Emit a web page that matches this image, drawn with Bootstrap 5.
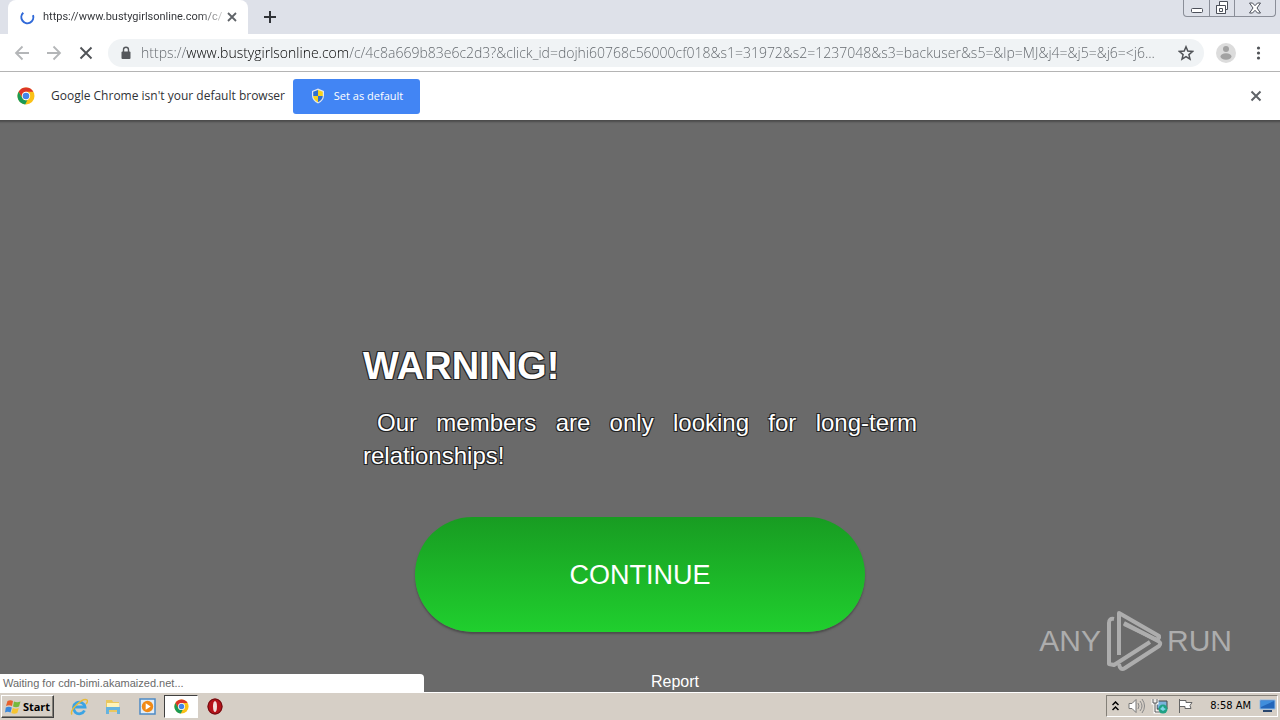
<!DOCTYPE html>
<html lang="en">
<head>
<meta charset="utf-8">
<meta name="viewport" content="width=device-width, initial-scale=1">
<title>Warning</title>
<link href="https://cdn.jsdelivr.net/npm/bootstrap@5.3.0/dist/css/bootstrap.min.css" rel="stylesheet">
<style>
  body { font-family: "Open Sans", "Noto Sans", sans-serif; font-size: 12px; line-height: 16px; color: #303236; background: #6a6a6a; }
  button { color: inherit; }
  .plain-btn { border: 0; background: none; padding: 0; display: flex; align-items: center; justify-content: center; }
  svg { display: block; flex: none; }
  .tab-strip { background: #dee1e9; height: 34px; padding-left: 8px; }
  .site-tab { width: 240px; background: #fff; border-radius: 8px 8px 0 0; padding: 0 9px 0 12px; }
  .tab-title { font-family: Roboto, "Open Sans", sans-serif; font-size: 11px; line-height: 18px; white-space: nowrap; padding-left: 8px; color: transparent; background: linear-gradient(90deg, #303236 88%, #c8c8c8); -webkit-background-clip: text; background-clip: text; }
  .window-buttons { height: 17px; border: 1px solid #8a8e98; border-top: 0; border-radius: 0 0 4px 4px; margin-right: 4px; }
  .window-buttons button + button { border-left: 1px solid #8a8e98; }
  .win-small { width: 25px; } .win-wide { width: 41px; }
  .toolbar-row { height: 38px; border-bottom: 1px solid #b4b4b4; padding: 0 12px 0 14px; background: #fff; }
  .nav-icons { width: 94px; }
  .address-bar { background: #f0f3f5; border-radius: 14px; height: 28px; padding: 0 10px 0 12px; margin-right: 12px; }
  .address-bar input { border: 0; padding: 0; height: 26px; margin-left: 9px; margin-right: 4px; outline: 0; font-size: 14px; font-weight: 300; color: transparent;
    background: linear-gradient(90deg, #5f6469 45px, #000 45px, #000 207px, #5f6469 207px); -webkit-background-clip: text; background-clip: text; }
  .info-row { height: 48px; background: #fff; padding: 0 18px 0 17px; }
  .default-btn { background: #4285f4; color: #fff; border-radius: 3px; height: 35px; width: 127px; font-size: 11px; }
  .page-area { background: #6a6a6a; box-shadow: inset 0 4px 2px -2px #4b4b4b; font-family: "Liberation Sans", Arial, sans-serif; color: #fff; padding-top: 222px; }
  .notice { width: 554px; }
  .outlined { text-shadow: -1px -1px 0 #222, 1px -1px 0 #222, -1px 1px 0 #222, 1px 1px 0 #222; }
  .notice h1 { font-size: 38px; line-height: 48px; font-weight: 700; margin: 0 0 16px; }
  .notice p { font-size: 24px; line-height: 33px; text-align: justify; text-indent: 14px; margin: 0 0 45px; }
  .continue-btn { width: 450px; height: 115px; border-radius: 58px; border: 0; color: #fff; font-size: 27px; padding: 0; background: linear-gradient(#189c22, #20cf2e); box-shadow: 0 2px 2px #4c4c4c; }
  .report-link { color: #fff; font-size: 16px; line-height: 20px; margin: 40px 0 0 70px; }
  .status-bubble { left: 0; bottom: 0; width: 424px; height: 18px; background: #fff; color: #6a6a6a; font-size: 11px; line-height: 18px; padding-left: 3px; border-radius: 0 4px 0 0; }
  .watermark { right: 48px; bottom: 19px; color: #adadad; font-size: 30px; line-height: 64px; gap: 4px; }
  .task-bar { height: 28px; background: #d6cfc6; border-top: 1px solid #fff; padding: 2px 2px 1px 1px; box-shadow: 0 -1px 0 #d6cfc6; color: #000; }
  .start-btn { width: 53px; height: 23px; background: #d6cfc6; border: 1px solid; border-color: #fff #404040 #404040 #fff; box-shadow: inset -1px -1px 0 #848078; font-weight: 700; font-size: 11px; gap: 1px; }
  .quick-btn { width: 34px; height: 23px; }
  .quick-btn.current { background: #fff; border: 1px solid; border-color: #404040 #fff #fff #404040; }
  .tray { height: 22px; border: 1px solid; border-color: #848078 #fff #fff #848078; width: 172px; padding: 0 1px 0 5px; font-family: "DejaVu Sans Condensed", "Open Sans", sans-serif; font-size: 11px; }
</style>
</head>
<body class="d-flex flex-column min-vh-100">
<svg width="0" height="0" class="position-absolute" aria-hidden="true">
  <symbol id="chrome" viewBox="0 0 18 18">
    <circle cx="9" cy="9" r="8.5" fill="#fbc116"/>
    <path d="M1.6 4.8A8.5 8.5 0 0 1 16.4 4.8H9A4.2 4.2 0 0 0 5.3 11z" fill="#dc3528"/>
    <path d="M1.6 4.8 5.3 11A4.2 4.2 0 0 0 10.4 13L8.2 17.5A8.5 8.5 0 0 1 1.6 4.8z" fill="#1a9a55"/>
    <circle cx="9" cy="9" r="4.2" fill="#fff"/><circle cx="9" cy="9" r="3.3" fill="#4285e8"/>
  </symbol>
</svg>

<header>
  <div class="tab-strip d-flex">
    <div class="site-tab d-flex align-items-center">
      <svg width="15" height="15" viewBox="0 0 15 15"><path d="M3.3 2.8A6 6 0 1 0 13 5.2" fill="none" stroke="#3069d8" stroke-width="2"/></svg>
      <span class="tab-title">https://www.bustygirlsonline.com/c/</span>
      <button class="plain-btn ms-auto" aria-label="Close tab"><svg width="14" height="14" viewBox="0 0 14 14"><path d="m3 3 8 8m0-8-8 8" stroke="#5f6368" stroke-width="1.8"/></svg></button>
    </div>
    <button class="plain-btn ms-3" aria-label="New tab"><svg width="12" height="12" viewBox="0 0 12 12"><path d="M6 0v12M0 6h12" stroke="#303338" stroke-width="2"/></svg></button>
    <div class="window-buttons d-flex ms-auto">
      <button class="plain-btn win-small" aria-label="Minimize"><svg width="14" height="12" viewBox="0 0 14 12"><rect x="1.5" y="6.5" width="11" height="4" rx="1" fill="#fff" stroke="#4c505a"/></svg></button>
      <button class="plain-btn win-small" aria-label="Restore"><svg width="14" height="14" viewBox="0 0 14 14"><path d="M4.500.500h8v8h-2v4h-9v-8h3z" fill="#fff" stroke="#4c505a"/><path d="M1.500 4.500h9v8M4.500 7.500h3v3h-3z" fill="none" stroke="#4c505a"/></svg></button>
      <button class="plain-btn win-wide" aria-label="Close"><svg width="14" height="12" viewBox="0 0 14 12"><path d="M1.500 1h3L7 3.700 9.500 1h3L9 6l3.500 5h-3L7 8.300 4.500 11h-3L5 6z" fill="#fff" stroke="#4c505a"/></svg></button>
    </div>
  </div>

  <div class="toolbar-row d-flex align-items-center">
    <div class="nav-icons d-flex gap-3">
      <button class="plain-btn" aria-label="Back"><svg width="16" height="16" viewBox="0 0 16 16"><path d="M15 8H2m6.500-6.500L2 8l6.500 6.500" fill="none" stroke="#b4b6b8" stroke-width="1.800"/></svg></button>
      <button class="plain-btn" aria-label="Forward"><svg width="16" height="16" viewBox="0 0 16 16"><path d="M1 8h13M7.500 1.500 14 8l-6.500 6.500" fill="none" stroke="#b4b6b8" stroke-width="1.800"/></svg></button>
      <button class="plain-btn" aria-label="Stop"><svg width="16" height="16" viewBox="0 0 16 16"><path d="m2.500 2.500 11 11m0-11-11 11" stroke="#505357" stroke-width="1.900"/></svg></button>
    </div>
    <div class="address-bar d-flex align-items-center flex-grow-1">
      <svg width="12" height="14" viewBox="0 0 12 14"><rect x="1.500" y="5.500" width="9" height="7.500" rx="1" fill="#55585c"/><path d="M3.500 6V3.700a2.500 2.500 0 0 1 5 0V6" fill="none" stroke="#55585c" stroke-width="1.400"/></svg>
      <input class="flex-grow-1" type="text" aria-label="Address" value="https://www.bustygirlsonline.com/c/4c8a669b83e6c2d3?&amp;click_id=dojhi60768c56000cf018&amp;s1=31972&amp;s2=1237048&amp;s3=backuser&amp;s5=&amp;lp=MJ&amp;j4=&amp;j5=&amp;j6=&lt;j6...">
      <button class="plain-btn" aria-label="Bookmark"><svg width="16" height="16" viewBox="0 0 16 16"><path d="m8 1.800 1.800 4.300 4.700.400-3.600 3.100 1.100 4.600L8 11.700l-4 2.500 1.100-4.600L1.500 6.500l4.700-.400z" fill="none" stroke="#505357" stroke-width="1.500"/></svg></button>
    </div>
    <button class="plain-btn" aria-label="Profile"><svg width="20" height="20" viewBox="0 0 20 20"><circle cx="10" cy="10" r="10" fill="#dcdcdc"/><circle cx="10" cy="6" r="3" fill="#a2a2a2"/><ellipse cx="10" cy="13.500" rx="5.500" ry="3.300" fill="#a2a2a2"/></svg></button>
    <button class="plain-btn ms-3" aria-label="Menu"><svg width="16" height="16" viewBox="0 0 16 16" fill="#505357"><circle cx="6.500" cy="3" r="1.600"/><circle cx="6.500" cy="8" r="1.600"/><circle cx="6.500" cy="13" r="1.600"/></svg></button>
  </div>

  <div class="info-row d-flex align-items-center">
    <svg width="18" height="18"><use href="#chrome"/></svg>
    <span class="ms-3 me-2">Google Chrome isn't your default browser</span>
    <button class="plain-btn default-btn"><svg class="me-2" width="16" height="16" viewBox="0 0 16 16"><path d="M8 .500 14 3v4.500q0 5-6 8-6-3-6-8V3z" fill="#e4e7ec"/><path d="M8 2v6H3.200V3.700z" fill="#2f6fd0"/><path d="M8 2v6h4.800V3.700z" fill="#f7d21c"/><path d="M3.200 8H8v6.200Q3.500 12 3.200 8z" fill="#f7d21c"/><path d="M12.800 8H8v6.200q4.500-2.200 4.800-6.200z" fill="#2f6fd0"/></svg><span>Set as default</span></button>
    <button class="plain-btn ms-auto" aria-label="Dismiss"><svg width="12" height="12" viewBox="0 0 12 12"><path d="m1.500 1.500 9 9m0-9-9 9" stroke="#5f6368" stroke-width="2"/></svg></button>
  </div>
</header>

<main class="page-area flex-grow-1 position-relative d-flex flex-column align-items-center">
  <div class="notice outlined">
    <h1>WARNING!</h1>
    <p>Our members are only looking for long-term relationships!</p>
  </div>
  <button class="continue-btn">CONTINUE</button>
  <a class="report-link text-decoration-none" href="#">Report</a>
  <div class="status-bubble position-absolute text-nowrap">Waiting for cdn-bimi.akamaized.net...</div>
  <div class="watermark position-absolute d-flex align-items-center">
    <span>ANY</span>
    <svg width="58" height="64" viewBox="0 0 58 64" fill="none" stroke="#adadad" stroke-width="4" stroke-linejoin="round"><path d="M9 10Q4 9 4 14V55L9 56 45 33"/><path d="M14 46V4L54 27Q55 31 50 30L19 15"/><path d="M14 55Q15 62 20 59L54 37Q57 34 53 32L19 14"/></svg>
    <span>RUN</span>
  </div>
</main>

<footer class="task-bar d-flex">
  <button class="plain-btn start-btn"><svg width="17" height="16" viewBox="0 0 17 16"><path d="M2.500 2Q5.500.500 8 2L7 7Q4 5.500 1 7z" fill="#e8602c"/><path d="M9 2.500q3 1.500 6.500 0L14 7.500q-3 1.500-6 0z" fill="#75b93c"/><path d="M.800 8.500q3-1.500 6 0l-1.300 5q-3-1.500-5.500 0z" fill="#3a88dc"/><path d="M7.800 9q3 1.500 6 0l-1.500 5q-3 1.500-6 0z" fill="#f6c431"/></svg><span>Start</span></button>
  <button class="plain-btn quick-btn ms-2" aria-label="Internet Explorer"><svg width="18" height="18" viewBox="0 0 18 18"><path d="M14.500 12.500A5.800 5.800 0 1 1 15 9H5" fill="none" stroke="#3ba4e4" stroke-width="2.800"/><path d="M2 16.500C-1 12 13-1 17 2c1 1 0 3-1 4" fill="none" stroke="#e8bb38" stroke-width="1.500"/></svg></button>
  <button class="plain-btn quick-btn" aria-label="Explorer"><svg width="18" height="18" viewBox="0 0 18 18"><path d="M2 2h6l1 2h6v10H2z" fill="#e9c75f"/><path d="M3 5h12v4H3z" fill="#fff3b8"/><path d="M2 9h14v7h-3v-4H5v4H2z" fill="#65b3df"/></svg></button>
  <button class="plain-btn quick-btn" aria-label="Media Player"><svg width="17" height="17" viewBox="0 0 17 17"><path d="M1 1h15v15H1z" fill="#e3edf7" stroke="#4d8bc5" stroke-width="1.500"/><circle cx="8.500" cy="8.500" r="5.700" fill="#f18a16"/><path d="m6.700 5.200 5 3.300-5 3.300z" fill="#fff"/></svg></button>
  <button class="plain-btn quick-btn current" aria-label="Chrome"><svg width="15" height="15"><use href="#chrome"/></svg></button>
  <button class="plain-btn quick-btn" aria-label="Opera"><svg width="16" height="17" viewBox="0 0 16 17"><ellipse cx="8" cy="8.500" rx="7.500" ry="8" fill="#b51219"/><ellipse cx="8" cy="8.500" rx="7" ry="7.500" fill="none" stroke="#651014"/><ellipse cx="8" cy="8.500" rx="2" ry="5.500" fill="#f3dfdc"/></svg></button>
  <div class="tray d-flex align-items-center ms-auto">
    <svg width="7" height="10" viewBox="0 0 7 10"><path d="m.500 4 3-3 3 3m-6 5 3-3 3 3" fill="none" stroke="#000" stroke-width="1.500"/></svg>
    <svg class="ms-2" width="20" height="16" viewBox="0 0 20 16"><path d="M2 5.500h3l4-4v13l-4-4H2z" fill="#fff" stroke="#777"/><path d="M11 5q2 3 0 6m2-8q4 5 0 10m2-12q5 7 0 14" fill="none" stroke="#888"/></svg>
    <svg class="ms-1" width="18" height="16" viewBox="0 0 18 16"><path d="M6 3h10v8H6z" fill="#7bb3dd" stroke="#444"/><path d="M2 1v4h4V1M4 5v9h5" fill="none" stroke="#fff" stroke-width="3"/><path d="M2 1v4h4V1M4 5v9h5" fill="none" stroke="#555"/><circle cx="12" cy="11" r="4.500" fill="#20a184"/><path d="m9 11 3-3 1 2 2 1-3 2z" fill="#7bd4e6"/></svg>
    <svg class="ms-2" width="18" height="16" viewBox="0 0 18 16"><path d="M2.500 1v14M3 2.500h6v2h6l-2 3 1 3H8v-2H3" fill="#fff" stroke="#666"/></svg>
    <span class="ms-auto me-2 text-nowrap">8:58 AM</span>
    <svg width="17" height="14" viewBox="0 0 17 14"><path d="M1 1h15v9H1z" fill="#2366ba" stroke="#8ebae7"/><path d="M2 2h13L2 8z" fill="#408edc"/><path d="M4 11h9v2H4z" fill="#27456d"/></svg>
  </div>
</footer>
<script src="https://cdn.jsdelivr.net/npm/bootstrap@5.3.0/dist/js/bootstrap.bundle.min.js"></script>
</body>
</html>
